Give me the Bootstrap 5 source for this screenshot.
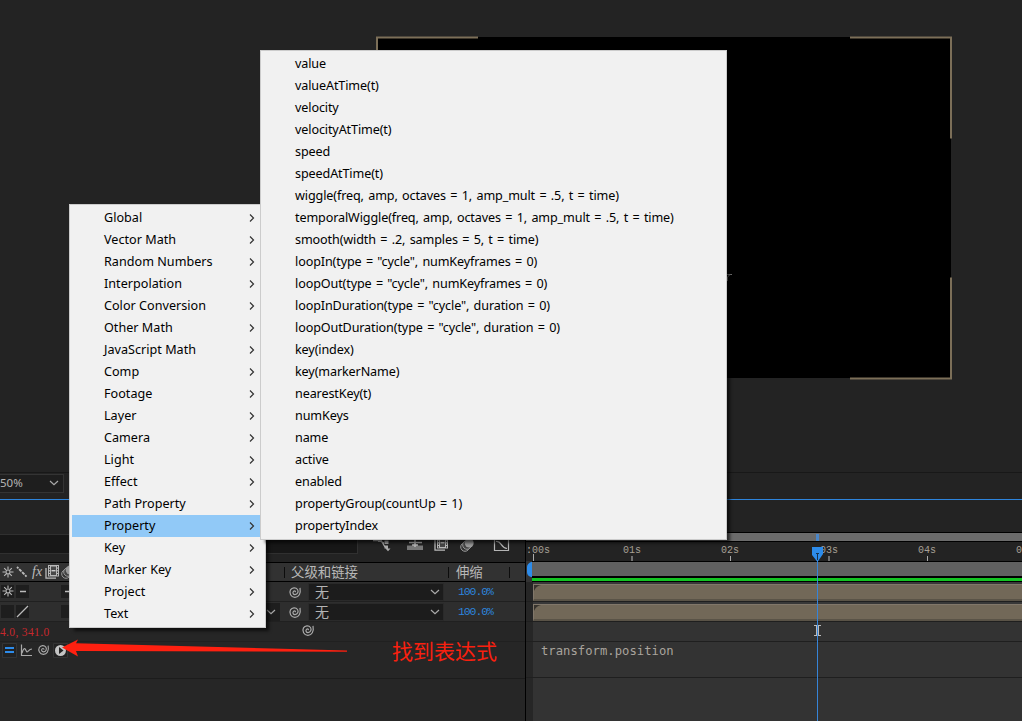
<!DOCTYPE html>
<html lang="zh">
<head>
<meta charset="utf-8">
<title>Expression menu</title>
<link href="https://cdn.jsdelivr.net/npm/bootstrap@5.3.0/dist/css/bootstrap.min.css" rel="stylesheet">
<style>
body{width:1022px;height:721px;overflow:hidden;background:#232323;font-family:"Noto Sans","Noto Sans CJK SC",sans-serif;font-size:13px;line-height:1;color:#b4b4b4}
svg{display:block;flex:none}
.viewer{height:472px;padding:37px 0 0 377px}
.comp{width:574px;height:341px;background:#000}
.zoombar{height:27px;border-top:1px solid #181818;padding-top:1px}
.zoombox{width:64px;height:19px;border:1px solid #343434;border-left:0;background:#1e1e1e;font-size:11.5px;padding:0 4px 1px 0}
.timeline{height:222px;border-top:1px solid #2d84dc}
.leftpane{width:525px;background:#262626}
.toolrow{height:62px;background:#232323;padding-top:34px}
.searchbox{width:358px;height:20px;background:#171717;border:1px solid #303030;border-left:0}
.colhead{height:20px;background:#323232;border-top:1px solid #000;border-bottom:1px solid #000;font-size:13.4px;font-family:"Noto Sans CJK SC",sans-serif;color:#b8b8b8}
.lrow{height:20px;background:#2e2e2e;border-bottom:1px solid #202020}
.pick{width:136px;height:18px;background:#1c1c1c;border:1px solid #2a2a2a;font-size:14px;padding:0 3px 0 6px;margin-left:6px}
.sep{width:1px;height:11px;background:#0c0c0c}
.pct{width:67px;color:#2d84dc;font:11.5px "Liberation Mono",monospace;letter-spacing:-1.1px}
.redval{color:#c8282d;font:11.5px "Liberation Serif",serif;letter-spacing:.35px}
.rightpane{border-left:1px solid #000;background:#333}
.topgap{height:32px;background:#232323}
.navbarline{height:10px;background:#6b6b6b;border:1px solid #000;border-width:1px 0}
.ruler{height:19px;background:#232323}
.ruler svg text{font:11.5px "Liberation Mono",monospace;fill:#a8a096}
.worka{height:16px;background:#606060;border:1px solid #000;border-width:1px 0;margin-left:6px}
.cache{height:5px;background:#13c422;border:1px solid #000;border-width:1px 0;margin-left:6px}
.trk{height:20px;border-bottom:1px solid #1f1f1f;padding:2px 0 0 7px;background:linear-gradient(90deg,#262626 7px,#383838 7px)}
.clip{height:17px;background:#726858;border-bottom:2px solid #5a5347;border-top:1px solid #81776a;border-left:1px solid #81776a}
.blankt{background:linear-gradient(90deg,#262626 7px,#333 7px);border-bottom:1px solid #1f1f1f}
.code{font:12.2px/1 "DejaVu Sans Mono","Liberation Mono",monospace;letter-spacing:.03px;color:#a9a49d}
.over{position:absolute}
.popmenu{background:#f1f1f1;border:1px solid #ccc;padding:2px;box-shadow:4px 4px 3px -1px rgba(0,0,0,.6);color:#000;font-family:"Noto Sans",sans-serif;font-size:12.6px}
.mi{height:22px;padding-left:32px;white-space:nowrap}
.mi.on{background:#91c9f7}
.main-m .mi{letter-spacing:.02px}
.sub-m .mi{letter-spacing:-.12px;word-spacing:1.2px}
.red{color:#f9200f;font:21px/1 "Noto Sans CJK SC",sans-serif}
</style>
</head>
<body class="position-relative">
<svg width="0" height="0" class="over"><defs>
<symbol id="spiral" viewBox="0 0 14 14"><path d="M7.200 7.200c.7-1-.8-1.700-1.700-.8-1.200 1.200-.3 3.200 1.500 3.200 2.600 0 3.900-3 2.500-5.100C7.800 2 4 2.400 2.500 4.900.8 8 3 12.200 6.800 12.300c4 .1 6.300-3.700 5.200-9.500" fill="none" stroke="#aaa" stroke-width="1.200"/></symbol>
<symbol id="down" viewBox="0 0 10 6"><path d="M1 1l4 3.600L9 1" fill="none" stroke="#aaa" stroke-width="1.200"/></symbol>
<symbol id="sun" viewBox="0 0 12 12"><g stroke="#bbb" stroke-width="1.100" fill="none"><circle cx="6" cy="6" r="2"/><path d="M6 .5v3M6 8.500v3M.5 6h3M8.500 6h3M2.200 2.200l2 2M7.800 7.800l2 2M9.800 2.200l-2 2M4.200 7.800l-2 2"/></g></symbol>
<symbol id="film" viewBox="0 0 14 14"><path d="M1 3v10.200H11" fill="none" stroke="#bbb" stroke-width="1.300"/><path d="M3 0h11v11.500H3z" fill="#b8b8b8"/><path d="M6 1.500h5v8.500H6z" fill="#484848"/><path d="M6.500 5.700h4" stroke="#ccc" stroke-width="1.400"/><path d="M4.500 1v10M12.500 1v10" stroke="#333" stroke-dasharray="1.500 1.200"/></symbol>
<symbol id="blur" viewBox="0 0 14 14"><circle cx="5" cy="9" r="4.300" fill="#333" stroke="#999"/><circle cx="7" cy="7" r="4.300" fill="#444" stroke="#999"/><circle cx="9.200" cy="5" r="4.500" fill="#999"/></symbol>
</defs></svg>

<div class="viewer"><div class="comp"></div></div>
<div class="zoombar"><div class="zoombox d-flex align-items-center justify-content-between"><span>50%</span><svg width="10" height="6"><use href="#down"/></svg></div></div>

<div class="timeline d-flex">
  <div class="leftpane flex-shrink-0">
    <div class="toolrow d-flex">
      <div class="searchbox"></div>
      <svg width="155" height="20" viewBox="358 534 155 20">
        <path d="M373 540.500h9M380 541c2 0 2 2 4 2M382 542l3 5" fill="none" stroke="#aaa" stroke-width="1.300"/><path d="M378 538h3.500v4H378zM384.500 540.500h4v3.500h-4zM384.500 545.500h3.500v3h-3.500zM385.500 548.500h5l-2.500 2.800z" fill="#aaa"/>
        <path d="M407 545.500h6v-1h4v1h6v4.500h-16z" fill="#777"/><path d="M409 542.500h13M415 537v10M412 545h6" stroke="#b5b5b5" stroke-width="1.600" fill="none"/>
        <use href="#film" x="434" y="537" width="14" height="14"/>
        <use href="#blur" x="460" y="538" width="14" height="14"/>
        <path d="M494.500 538v12.500h14V538M492 539.500h5M496 541.500c6-1 4 6 11 7" fill="none" stroke="#b4b4b4" stroke-width="1.200"/>
      </svg>
    </div>
    <div class="colhead d-flex align-items-center">
      <svg width="76" height="14" viewBox="0 0 76 14"><use href="#sun" x="2" y="1" width="12" height="12"/><path d="M17 2l3 3M20 5l3 3M23 8l4 4" stroke="#bbb" stroke-width="1.800" stroke-dasharray="2 1"/><text x="32" y="11" font-family="Liberation Serif" font-style="italic" font-size="14" fill="#bbb">fx</text><use href="#film" x="45" y="0" width="14" height="14"/><use href="#blur" x="61" y="0" width="14" height="14"/></svg>
      <div class="sep" style="margin-left:208px"></div><span style="margin-left:6px">父级和链接</span>
      <div class="sep" style="margin-left:90px"></div><span style="margin-left:7px">伸缩</span><div class="sep" style="margin-left:26px"></div>
    </div>
    <div class="lrow d-flex align-items-center">
      <svg width="288" height="18" viewBox="0 0 288 18"><path d="M1 2h13v13H1zM16 2h13v13H16zM61 2h13v13H61z" fill="#1e1e1e"/><use href="#sun" x="2" y="2" width="12" height="12"/><path d="M20 8.500h6M65 8.500h6" stroke="#bbb" stroke-width="1.500"/></svg>
      <svg width="14" height="14"><use href="#spiral"/></svg>
      <div class="pick d-flex align-items-center justify-content-between me-auto"><span>无</span><svg width="10" height="6"><use href="#down"/></svg></div>
      <span class="pct">100.0%</span>
    </div>
    <div class="lrow d-flex align-items-center">
      <svg width="288" height="18" viewBox="0 0 288 18"><path d="M1 2h13v13H1zM16 2h13v13H16zM61 2h13v13H61zM240 0h40v18h-40z" fill="#1e1e1e"/><path d="M17 14L28 3" stroke="#bbb" stroke-width="1.300"/><use href="#down" x="266" y="6" width="10" height="6"/></svg>
      <svg width="14" height="14"><use href="#spiral"/></svg>
      <div class="pick d-flex align-items-center justify-content-between me-auto"><span>无</span><svg width="10" height="6"><use href="#down"/></svg></div>
      <span class="pct">100.0%</span>
    </div>
    <div class="d-flex align-items-center" style="height:20px;border-bottom:1px solid #202020"><span class="redval" style="width:301px">4.0, 341.0</span><svg width="14" height="14" style="margin-top:-4px"><use href="#spiral"/></svg></div>
    <div style="height:37px;border-bottom:1px solid #1c1c1c">
      <svg width="72" height="17" viewBox="0 641 72 17"><path d="M2.500 642.500h14v14h-14zM53.500 642.500h14v14h-14z" fill="#222" stroke="#343434"/><path d="M5 647h9M5 651h9" stroke="#2d8ceb" stroke-width="2"/><path d="M21.500 643.500v11H32M22 652c3-9 4-1 5-1s2-3 5-3" fill="none" stroke="#aaa" stroke-width="1.200"/><use href="#spiral" x="37" y="642" width="13" height="13"/><circle cx="60.500" cy="649.500" r="5.500" fill="#c4c4c4"/><path d="M59 646l4.500 3.500L59 653z" fill="#222"/></svg>
    </div>
  </div>
  <div class="rightpane flex-grow-1">
    <div class="topgap"></div>
    <div class="navbarline"></div>
    <div class="ruler"><svg width="496" height="19" viewBox="526 542 496 19">
      <g><text x="526" y="553" textLength="24" lengthAdjust="spacingAndGlyphs">:00s</text><text x="623" y="553" textLength="18" lengthAdjust="spacingAndGlyphs">01s</text><text x="721" y="553" textLength="18" lengthAdjust="spacingAndGlyphs">02s</text><text x="820" y="553" textLength="18" lengthAdjust="spacingAndGlyphs">03s</text><text x="918" y="553" textLength="18" lengthAdjust="spacingAndGlyphs">04s</text><text x="1016" y="553" textLength="6" lengthAdjust="spacingAndGlyphs">0</text></g>
      <path d="M533.500 554v7M730.500 556v5M927.500 556v5" stroke="#aaa"/><path d="M632 556v5M829 556v5" stroke="#707070" stroke-width="2"/></svg></div>
    <div class="worka"></div>
    <div class="cache"></div>
    <div class="trk"><div class="clip"><svg width="8" height="7"><path d="M0 0h7Q2 1 0 6z" fill="#38342e"/></svg></div></div>
    <div class="trk"><div class="clip"><svg width="8" height="7"><path d="M0 0h7Q2 1 0 6z" fill="#38342e"/></svg></div></div>
    <div class="blankt" style="height:20px"></div>
    <div class="blankt code" style="height:36px;padding:3px 0 0 15px">transform.position</div>
    <div class="blankt" style="height:50px;border:0"></div>
  </div>
</div>

<!-- layer bounds, playhead and pointer -->
<svg class="over top-0 start-0" width="1022" height="721">
  <path d="M377 138V37H478M850 37H951V138M951 277V378H850" fill="none" stroke="#7c6f58" stroke-width="2" transform="translate(0 .5)"/>
  <path d="M727 274.500h5M727.500 281v-4l2-2" stroke="#777" fill="none"/>
  <path d="M527 533h5v7h-5z" fill="#2d8ceb"/>
  <path d="M532 562h-1q-4 2-4 5v5q0 4 4 5h1z" fill="#2d8ceb"/>
  <path d="M816 534h3v7h-3z" fill="#4a86c8"/>
  <path d="M812 547h11v7l-5.500 8-5.500-7z" fill="#2d8ceb"/><path d="M816 553.500h3M817.500 553v7" stroke="#16324f"/>
  <path d="M817.500 561v160" stroke="#3684d8"/>
  <path d="M814 625.500h3M818 625.500h3M814 635.500h3M818 635.500h3M816.500 626v9M818.500 626v9" stroke="#bbb"/>
</svg>

<div class="popmenu main-m over" style="left:69px;top:204px;width:197px;height:424px" id="mainMenu"></div>
<div class="popmenu sub-m over" style="left:260px;top:50px;width:467px;height:490px" id="subMenu"></div>

<svg class="over top-0 start-0" width="1022" height="721"><path d="M62 647.500L78 639.500 76 643.300 347 650.500V651.800L76 651 78 656.500z" fill="#ff2010"/></svg>
<div class="over red" style="left:392px;top:640px">找到表达式</div>

<script src="https://cdn.jsdelivr.net/npm/bootstrap@5.3.0/dist/js/bootstrap.bundle.min.js"></script>
<script>
const groups=["Global","Vector Math","Random Numbers","Interpolation","Color Conversion","Other Math","JavaScript Math","Comp","Footage","Layer","Camera","Light","Effect","Path Property","Property","Key","Marker Key","Project","Text"];
const props=["value","valueAtTime(t)","velocity","velocityAtTime(t)","speed","speedAtTime(t)","wiggle(freq, amp, octaves = 1, amp_mult = .5, t = time)","temporalWiggle(freq, amp, octaves = 1, amp_mult = .5, t = time)","smooth(width = .2, samples = 5, t = time)","loopIn(type = \"cycle\", numKeyframes = 0)","loopOut(type = \"cycle\", numKeyframes = 0)","loopInDuration(type = \"cycle\", duration = 0)","loopOutDuration(type = \"cycle\", duration = 0)","key(index)","key(markerName)","nearestKey(t)","numKeys","name","active","enabled","propertyGroup(countUp = 1)","propertyIndex"];
mainMenu.innerHTML=groups.map(g=>`<div class="mi d-flex align-items-center justify-content-between${g==="Property"?" on":""}"><span>${g}</span><svg width="6" height="8" style="margin-right:8px"><path d="M1 .5L4.500 4 1 7.500" fill="none" stroke="#333" stroke-width="1.200"/></svg></div>`).join("");
subMenu.innerHTML=props.map(p=>`<div class="mi d-flex align-items-center"><span>${p}</span></div>`).join("");
</script>
</body>
</html>
